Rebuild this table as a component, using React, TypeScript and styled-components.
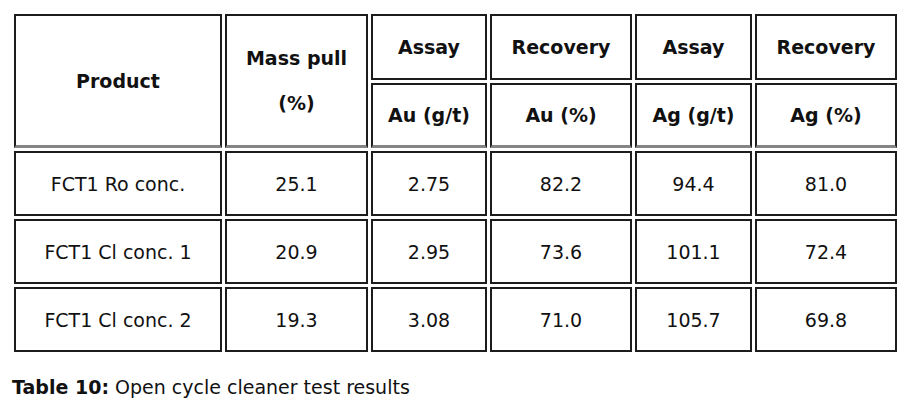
import React from 'react';
import styled, { createGlobalStyle } from 'styled-components';

const GlobalStyle = createGlobalStyle`
  html, body {
    margin: 0;
    padding: 0;
    background: #ffffff;
  }
  body {
    font-family: "DejaVu Sans", Verdana, sans-serif;
    color: #111111;
  }
`;

const Page = styled.div`
  padding: 11px 0 0 11px;
`;

const Table = styled.table`
  border-collapse: separate;
  border-spacing: 3px;
  table-layout: fixed;
  width: 889px;
`;

const Head = styled.th<{ $h: number; $last?: boolean }>`
  box-sizing: border-box;
  height: ${(p) => p.$h}px;
  border: 2px solid #1c1c1c;
  border-bottom: ${(p) => (p.$last ? '3px solid #858585' : '2px solid #1c1c1c')};
  padding: 0;
  font-size: 19px;
  font-weight: bold;
  text-align: center;
  vertical-align: middle;
`;

const HeadLine = styled.span`
  display: block;
  line-height: 45px;
`;

const Cell = styled.td`
  box-sizing: border-box;
  height: 65px;
  border: 2px solid #1c1c1c;
  padding: 0;
  font-size: 19px;
  text-align: center;
  vertical-align: middle;
`;

const Caption = styled.p`
  margin: 21px 0 0 1px;
  font-size: 19px;
`;

const rows = [
  ['FCT1 Ro conc.', '25.1', '2.75', '82.2', '94.4', '81.0'],
  ['FCT1 Cl conc. 1', '20.9', '2.95', '73.6', '101.1', '72.4'],
  ['FCT1 Cl conc. 2', '19.3', '3.08', '71.0', '105.7', '69.8'],
];

const widths = [208, 143, 116, 142, 117, 142];

export default function App() {
  return (
    <Page>
      <GlobalStyle />
      <Table>
        <colgroup>
          {widths.map((w, i) => (
            <col key={i} style={{ width: w }} />
          ))}
        </colgroup>
        <thead>
          <tr>
            <Head rowSpan={2} $h={134} $last>
              Product
            </Head>
            <Head rowSpan={2} $h={134} $last>
              <HeadLine>Mass pull</HeadLine>
              <HeadLine>(%)</HeadLine>
            </Head>
            <Head $h={66}>Assay</Head>
            <Head $h={66}>Recovery</Head>
            <Head $h={66}>Assay</Head>
            <Head $h={66}>Recovery</Head>
          </tr>
          <tr>
            <Head $h={65} $last>Au (g/t)</Head>
            <Head $h={65} $last>Au (%)</Head>
            <Head $h={65} $last>Ag (g/t)</Head>
            <Head $h={65} $last>Ag (%)</Head>
          </tr>
        </thead>
        <tbody>
          {rows.map((r) => (
            <tr key={r[0]}>
              {r.map((v, i) => (
                <Cell key={i}>{v}</Cell>
              ))}
            </tr>
          ))}
        </tbody>
      </Table>
      <Caption>
        <b>Table 10:</b> Open cycle cleaner test results
      </Caption>
    </Page>
  );
}
